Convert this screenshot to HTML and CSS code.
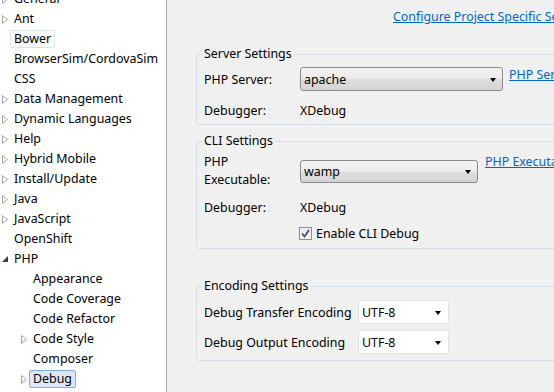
FILE: index.html
```html
<!DOCTYPE html>
<html lang="en">
<head>
    <meta charset="UTF-8">
    <title>Preferences: PHP Debug</title>
    <link rel="stylesheet" href="styles.css">
</head>
<body>
<div class="window">
    <nav class="tree">
        <ul>
            <li class="row"><span class="twisty"><svg width="6" height="9" viewBox="0 0 6 9"><path d="M0.5 0.5 L5.5 4.5 L0.5 8.5 Z" fill="none" stroke="#a6a6a6"/></svg></span><span class="label">General</span></li>
            <li class="row"><span class="twisty"><svg width="6" height="9" viewBox="0 0 6 9"><path d="M0.5 0.5 L5.5 4.5 L0.5 8.5 Z" fill="none" stroke="#a6a6a6"/></svg></span><span class="label">Ant</span></li>
            <li class="row"><span class="twisty"></span><span class="label focused">Bower</span></li>
            <li class="row"><span class="twisty"></span><span class="label">BrowserSim/CordovaSim</span></li>
            <li class="row"><span class="twisty"></span><span class="label">CSS</span></li>
            <li class="row"><span class="twisty"><svg width="6" height="9" viewBox="0 0 6 9"><path d="M0.5 0.5 L5.5 4.5 L0.5 8.5 Z" fill="none" stroke="#a6a6a6"/></svg></span><span class="label">Data Management</span></li>
            <li class="row"><span class="twisty"><svg width="6" height="9" viewBox="0 0 6 9"><path d="M0.5 0.5 L5.5 4.5 L0.5 8.5 Z" fill="none" stroke="#a6a6a6"/></svg></span><span class="label">Dynamic Languages</span></li>
            <li class="row"><span class="twisty"><svg width="6" height="9" viewBox="0 0 6 9"><path d="M0.5 0.5 L5.5 4.5 L0.5 8.5 Z" fill="none" stroke="#a6a6a6"/></svg></span><span class="label">Help</span></li>
            <li class="row"><span class="twisty"><svg width="6" height="9" viewBox="0 0 6 9"><path d="M0.5 0.5 L5.5 4.5 L0.5 8.5 Z" fill="none" stroke="#a6a6a6"/></svg></span><span class="label">Hybrid Mobile</span></li>
            <li class="row"><span class="twisty"><svg width="6" height="9" viewBox="0 0 6 9"><path d="M0.5 0.5 L5.5 4.5 L0.5 8.5 Z" fill="none" stroke="#a6a6a6"/></svg></span><span class="label">Install/Update</span></li>
            <li class="row"><span class="twisty"><svg width="6" height="9" viewBox="0 0 6 9"><path d="M0.5 0.5 L5.5 4.5 L0.5 8.5 Z" fill="none" stroke="#a6a6a6"/></svg></span><span class="label">Java</span></li>
            <li class="row"><span class="twisty"><svg width="6" height="9" viewBox="0 0 6 9"><path d="M0.5 0.5 L5.5 4.5 L0.5 8.5 Z" fill="none" stroke="#a6a6a6"/></svg></span><span class="label">JavaScript</span></li>
            <li class="row"><span class="twisty"></span><span class="label">OpenShift</span></li>
            <li class="row"><span class="twisty"><svg width="7" height="7" viewBox="0 0 7 7"><path d="M6 0 L6 6 L0 6 Z" fill="#3c3c3c"/></svg></span><span class="label">PHP</span></li>
            <li class="row child"><span class="twisty"></span><span class="label">Appearance</span></li>
            <li class="row child"><span class="twisty"></span><span class="label">Code Coverage</span></li>
            <li class="row child"><span class="twisty"></span><span class="label">Code Refactor</span></li>
            <li class="row child"><span class="twisty"><svg width="6" height="9" viewBox="0 0 6 9"><path d="M0.5 0.5 L5.5 4.5 L0.5 8.5 Z" fill="none" stroke="#a6a6a6"/></svg></span><span class="label">Code Style</span></li>
            <li class="row child"><span class="twisty"></span><span class="label">Composer</span></li>
            <li class="row child"><span class="twisty"><svg width="6" height="9" viewBox="0 0 6 9"><path d="M0.5 0.5 L5.5 4.5 L0.5 8.5 Z" fill="none" stroke="#a6a6a6"/></svg></span><span class="label selected">Debug</span></li>
        </ul>
    </nav>

    <main class="page">
        <div class="top-link"><a href="#">Configure Project Specific Settings...</a></div>

        <fieldset class="group server">
            <legend>Server Settings</legend>
            <div class="field combo-row">
                <span class="field-label">PHP Server:</span>
                <div class="combo button-combo wide"><span>apache</span><span class="arrow"></span></div>
                <a href="#" class="side-link">PHP Servers</a>
            </div>
            <div class="field text-row">
                <span class="field-label">Debugger:</span>
                <span>XDebug</span>
            </div>
        </fieldset>

        <fieldset class="group cli">
            <legend>CLI Settings</legend>
            <div class="field combo-row tall">
                <span class="field-label two-line">PHP<br>Executable:</span>
                <div class="combo button-combo narrow"><span>wamp</span><span class="arrow"></span></div>
                <a href="#" class="side-link">PHP Executables</a>
            </div>
            <div class="field text-row">
                <span class="field-label">Debugger:</span>
                <span>XDebug</span>
            </div>
            <div class="field check-row">
                <span class="field-label"></span>
                <span class="checkbox"><svg width="9" height="9" viewBox="0 0 9 9"><path d="M1 4.5 L3.5 7.5 L8 1" fill="none" stroke="#3c4f7a" stroke-width="1.8"/></svg></span>
                <span>Enable CLI Debug</span>
            </div>
        </fieldset>

        <fieldset class="group encoding">
            <legend>Encoding Settings</legend>
            <div class="field enc-row">
                <span class="enc-label">Debug Transfer Encoding</span>
                <div class="combo flat-combo"><span>UTF-8</span><span class="arrow"></span></div>
            </div>
            <div class="field enc-row">
                <span class="enc-label">Debug Output Encoding</span>
                <div class="combo flat-combo"><span>UTF-8</span><span class="arrow"></span></div>
            </div>
        </fieldset>
    </main>
</div>
</body>
</html>
```

FILE: styles.css
```css
body {
    margin: 0;
    padding: 0;
    font-family: "Noto Sans", "Liberation Sans", sans-serif;
    font-size: 12.4px;
    color: #000;
    background-color: #f0f0f0;
}
.window {
    display: flex;
    width: 554px;
    height: 392px;
    overflow: hidden;
}

/* left tree */
.tree {
    width: 166px;
    flex-shrink: 0;
    background-color: #ffffff;
    border-right: 1px solid #a9a9a9;
    overflow: hidden;
}
.tree ul {
    list-style: none;
    margin: -11px 0 0;
    padding: 0;
}
.row {
    display: flex;
    align-items: center;
    height: 20px;
    padding-left: 2px;
    white-space: nowrap;
}
.row.child {
    padding-left: 21px;
}
.twisty {
    width: 8px;
    display: flex;
    align-items: center;
}
.label {
    line-height: 16px;
    padding: 0 3px;
    border: 1px solid transparent;
    border-radius: 2px;
}
.label.focused {
    border-color: #dbe3ee;
    background-color: #f8fafd;
}
.label.selected {
    border-color: #84acdd;
    background-color: #dbe8f9;
}

/* right page */
.page {
    flex: 1;
    overflow: hidden;
    padding-left: 29px;
}
.top-link {
    height: 20px;
    line-height: 20px;
    margin-top: 7px;
    padding-left: 197px;
    white-space: nowrap;
}
a {
    color: #0066cc;
}
.group {
    width: 420px;
    margin: 0;
    border: 1px solid #d5dfe5;
    border-radius: 3px;
    padding: 0 0 4px 7px;
}
.group legend {
    padding: 0 2px;
    margin-left: -2px;
    line-height: 16px;
}
.server {
    margin-top: 19px;
}
.cli {
    margin-top: 8px;
    padding-bottom: 5px;
}
.encoding {
    margin-top: 29px;
    padding-bottom: 6px;
}
.field {
    display: flex;
    align-items: center;
    white-space: nowrap;
}
.field-label {
    width: 96px;
    flex-shrink: 0;
}
.two-line {
    line-height: 18px;
}
.combo-row {
    height: 24px;
    margin-top: 5px;
}
.combo-row.tall {
    height: 36px;
    margin-top: 4px;
}
.text-row {
    height: 20px;
    margin-top: 9px;
}
.cli .text-row {
    margin-top: 8px;
}
.check-row {
    height: 20px;
    margin-top: 6px;
}
.side-link {
    align-self: flex-start;
    line-height: 16px;
    margin-left: 6px;
}
.tall .side-link {
    margin-top: 1px;
    margin-left: 7px;
}

.combo {
    display: flex;
    align-items: center;
    justify-content: space-between;
    box-sizing: border-box;
    padding: 0 6px 0 3px;
}
.arrow {
    width: 0;
    height: 0;
    border-left: 3.5px solid transparent;
    border-right: 3.5px solid transparent;
    border-top: 4px solid #000;
    margin-top: 2px;
}
.button-combo {
    height: 24px;
    border: 1px solid #8a8a8a;
    border-radius: 3px;
    background: linear-gradient(#f3f3f3 0%, #ebebeb 50%, #dedede 51%, #d4d4d4 100%);
}
.button-combo.wide {
    width: 203px;
}
.button-combo.narrow {
    width: 178px;
    height: 23px;
}
.checkbox {
    width: 13px;
    height: 13px;
    box-sizing: border-box;
    border: 1px solid #8f8f8f;
    background: linear-gradient(#e8ebf0, #f6f7f9);
    display: flex;
    align-items: center;
    justify-content: center;
    margin: 0 4px 0 -1px;
}

.enc-row {
    height: 24px;
    margin-top: 6px;
}
.enc-label {
    width: 154px;
    flex-shrink: 0;
}
.flat-combo {
    width: 91px;
    height: 24px;
    background-color: #ffffff;
    border: 1px solid #e2e2e2;
    border-radius: 2px;
    padding-right: 7px;
}
```
